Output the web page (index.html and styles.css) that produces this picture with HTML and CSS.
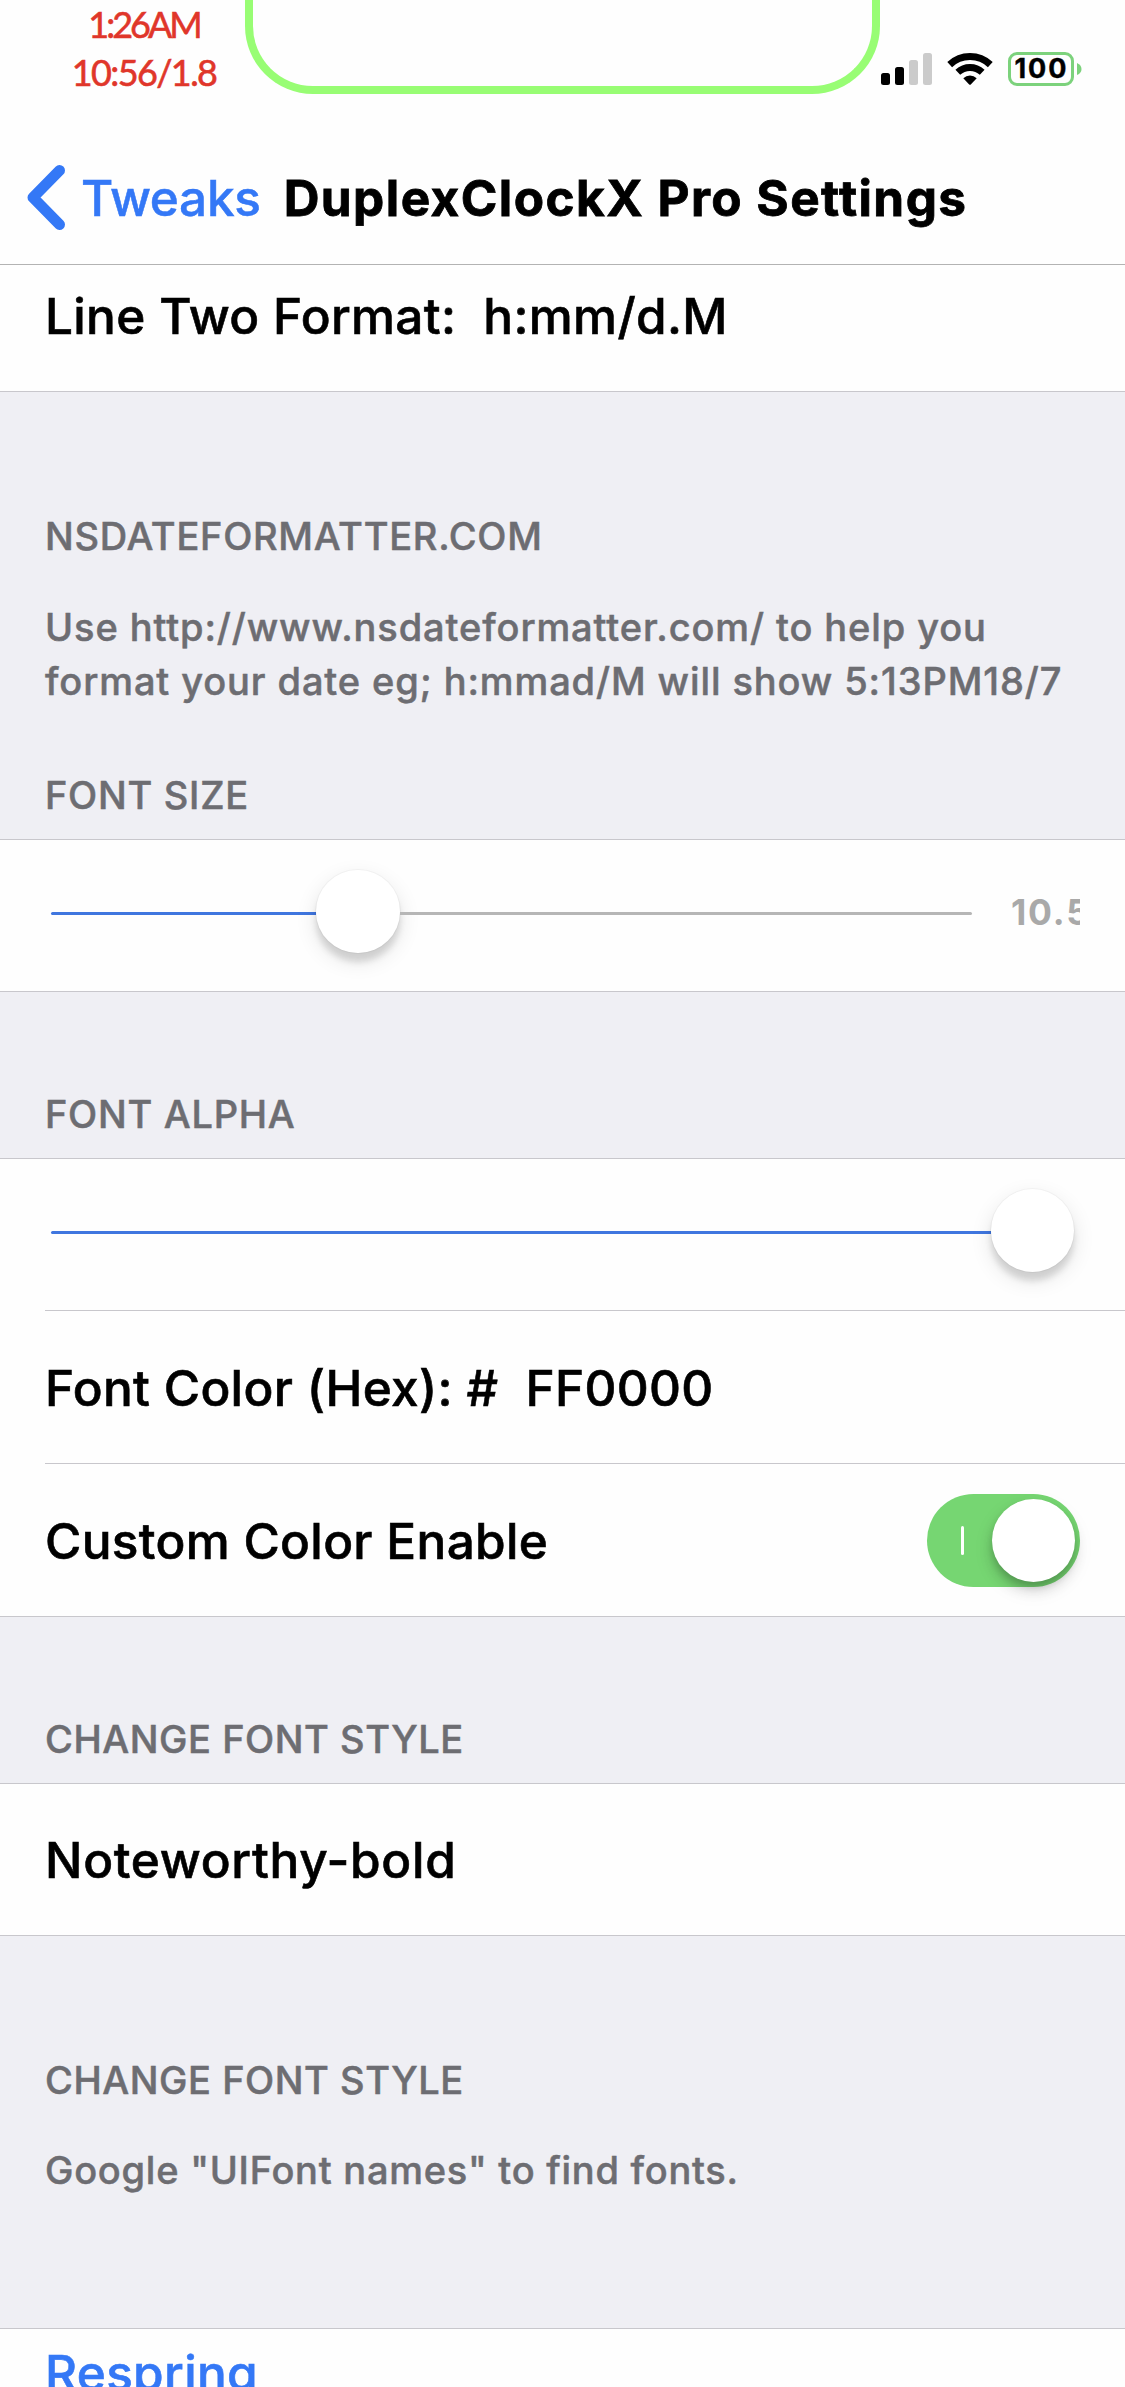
FILE: index.html
```html
<!DOCTYPE html>
<html lang="en">
<head>
<meta charset="utf-8">
<title>DuplexClockX Pro Settings</title>
<link rel="stylesheet" href="styles.css">
</head>
<body>
<header class="top">
  <div class="status">
    <div class="clock">
      <div class="clock-line clock-time">1:26AM</div>
      <div class="clock-line clock-date">10:56/1.8</div>
    </div>
    <div class="notch"></div>
    <div class="indicators">
      <svg class="signal" width="51" height="32" viewBox="0 0 51 32">
        <rect x="0" y="20" width="9" height="12" rx="2.5"/>
        <rect x="14" y="14" width="9" height="18" rx="2.5"/>
        <rect class="dim" x="28" y="7" width="9" height="25" rx="2.5"/>
        <rect class="dim" x="42" y="0" width="9" height="32" rx="2.5"/>
      </svg>
      <svg class="wifi" width="46" height="33" viewBox="0 0 46 33">
        <path class="arc" d="M2.7 12.6A29.5 29.5 0 0 1 43.3 12.6"/>
        <path class="arc" d="M10.8 20.3A18 18 0 0 1 35.2 20.3"/>
        <path d="M16.3 26.2A10 10 0 0 1 29.7 26.2L23.8 32.5Q23 33.2 22.2 32.5Z"/>
      </svg>
      <div class="battery"><span class="level">100</span></div>
      <svg class="nub" width="5" height="12" viewBox="0 0 5 12"><path d="M0 0Q4.500 2 4.500 6T0 12Z"/></svg>
    </div>
  </div>
  <nav class="nav">
    <svg class="chevron" width="40" height="66" viewBox="0 0 40 66"><path d="M33.500 5.500L7 32.500L33.500 59.500"/></svg>
    <a class="back">Tweaks</a>
    <h1 class="title">DuplexClockX Pro Settings</h1>
  </nav>
</header>
<main>
  <section class="group group-first">
    <div class="row row-cut"><span class="label">Line Two Format:&nbsp; h:mm/d.M</span></div>
  </section>
  <h2 class="head head-loose">NSDATEFORMATTER.COM</h2>
  <p class="note">Use http://www.nsdateformatter.com/ to help you<br>format your date eg; h:mmad/M will show 5:13PM18/7</p>
  <h2 class="head head-size">FONT SIZE</h2>
  <section class="group">
    <div class="row row-slider">
      <div class="slider slider-size"><div class="fill"></div><div class="knob"></div><div class="rest"></div></div>
      <div class="value">10.5</div>
    </div>
  </section>
  <h2 class="head head-section">FONT ALPHA</h2>
  <section class="group">
    <div class="row row-slider">
      <div class="slider slider-alpha"><div class="fill"></div><div class="knob"></div></div>
    </div>
    <div class="row row-split"><span class="label">Font Color (Hex): #&nbsp; FF0000</span></div>
    <div class="row row-split row-toggle"><span class="label">Custom Color Enable</span>
      <div class="toggle"><div class="toggle-mark"></div><div class="knob knob-toggle"></div></div>
    </div>
  </section>
  <h2 class="head head-section head-tight">CHANGE FONT STYLE</h2>
  <section class="group">
    <div class="row"><span class="label label-wide">Noteworthy-bold</span></div>
  </section>
  <h2 class="head head-loose head-tight">CHANGE FONT STYLE</h2>
  <p class="note note-last">Google "UIFont names" to find fonts.</p>
  <section class="group group-last">
    <div class="row row-respring"><a class="label link">Respring</a></div>
  </section>
</main>
</body>
</html>
```
FILE: styles.css
```css
* { box-sizing: border-box; }
html, body { margin: 0; }
body {
  width: 1125px;
  height: 2387px;
  overflow: hidden;
  background: #efeff4;
  color: #000;
  font-family: Inter, "Liberation Sans", sans-serif;
}
h1, h2, p { margin: 0; }
svg { display: block; flex: none; }

.top { height: 265px; background: #fefefe; border-bottom: 1px solid #b3b3b3; }
.status { display: flex; height: 132px; }
.clock {
  width: 245px;
  padding-left: 44px;
  color: #e0362a;
  font: 400 36px/48px Lato, sans-serif;
  -webkit-text-stroke: .6px #e0362a;
}
.clock-line { width: 200px; text-align: center; white-space: nowrap; }
.clock-time { letter-spacing: -3px; }
.clock-date { letter-spacing: -1.6px; }
.notch {
  width: 635px;
  height: 94px;
  border: 8px solid #98fd74;
  border-top: 0;
  border-radius: 0 0 68px 68px;
}
.indicators { display: flex; align-items: flex-start; padding: 52px 0 0 1px; }
.signal { margin-top: 1px; }
.signal .dim { fill: #cbcbcb; }
.wifi { margin-left: 15px; }
.arc { fill: none; stroke: #000; stroke-width: 7; }
.battery {
  display: flex;
  align-items: center;
  justify-content: center;
  width: 66px;
  height: 34px;
  margin-left: 15px;
  border: 3px solid #7cd27c;
  border-radius: 9px;
}
.level { padding-left: 1px; font-size: 27px; font-weight: 700; line-height: 28px; letter-spacing: 2px; -webkit-text-stroke: .4px #000; }
.nub { margin: 11px 0 0 3px; fill: #7cd27c; }

.nav { display: flex; align-items: center; height: 132px; padding-left: 26px; }
.chevron path { fill: none; stroke: #3478f6; stroke-width: 11; stroke-linecap: round; stroke-linejoin: round; }
.back, .title { font-size: 49.5px; line-height: 60px; white-space: nowrap; -webkit-text-stroke: .5px currentColor; }
.back { margin-left: 15px; color: #3478f6; font-weight: 500; letter-spacing: -.3px; }
.title { margin-left: 23px; font-weight: 700; letter-spacing: 1.45px; -webkit-text-stroke-width: .8px; }

.group { background: #fefefe; border-top: 1px solid #c8c7cc; border-bottom: 1px solid #c8c7cc; }
.group-first { border-top: 0; }
.row { display: flex; align-items: center; height: 151px; padding-left: 45px; }
.row-cut { height: 126px; padding-bottom: 24px; }
.row-split { position: relative; height: 153px; padding-top: 2px; }
.row-split::before {
  position: absolute;
  top: 0;
  left: 45px;
  right: 0;
  border-top: 1px solid #c8c7cc;
  content: "";
}
.row-toggle { justify-content: space-between; padding-right: 45px; }
.row-respring { height: 87px; }
.label { font-size: 49.5px; font-weight: 500; line-height: 60px; letter-spacing: .33px; white-space: nowrap; -webkit-text-stroke: .6px currentColor; }
.label-wide { letter-spacing: .7px; }
.link { color: #3478f6; }

.head, .note { padding-left: 45px; color: #6d6d72; font-size: 38px; font-weight: 500; line-height: 54px; white-space: nowrap; -webkit-text-stroke: .5px currentColor; }
.head { letter-spacing: .72px; }
.head-tight { letter-spacing: .55px; }
.head-loose { padding-top: 117px; }
.note { padding-top: 37px; letter-spacing: .9px; }
.note-last { padding-top: 36px; padding-bottom: 131px; letter-spacing: .75px; }
.head-size { padding-top: 60px; padding-bottom: 17px; }
.head-section { padding-top: 95px; padding-bottom: 17px; }

.row-slider { align-items: flex-start; padding-top: 30px; }
.slider { display: flex; align-items: center; height: 83px; padding-left: 6px; }
.slider-size { width: 927px; }
.slider-alpha { width: 1029px; }
.fill, .rest { height: 3px; margin-top: 4px; }
.fill { background: #3f76df; border-radius: 2px 0 0 2px; }
.rest { flex: 1; background: #b6b6b6; border-radius: 0 2px 2px 0; }
.slider-size .fill { width: 265px; }
.slider-alpha .fill { flex: 1; }
.knob {
  flex: none;
  width: 83.500px;
  height: 83.500px;
  border-radius: 50%;
  background: #fff;
  box-shadow: 0 0 0 1px rgba(0,0,0,.03), 0 9px 6px rgba(0,0,0,.12), 0 8px 22px rgba(0,0,0,.11);
}
.value {
  width: 69px;
  margin-left: 39px;
  overflow: hidden;
  color: #a9a9a9;
  font-size: 35.500px;
  font-weight: 700;
  line-height: 86px;
  letter-spacing: 1.8px;
}
.toggle {
  display: flex;
  align-items: center;
  justify-content: space-between;
  width: 153px;
  height: 93px;
  padding: 0 5px 0 34px;
  border-radius: 47px;
  background: #76d672;
}
.toggle-mark { width: 3px; height: 29px; border-radius: 2px; background: #fff; }
.knob-toggle { width: 83px; height: 83px; box-shadow: 0 8px 14px rgba(0,0,0,.16), 0 5px 6px rgba(0,0,0,.12), 0 8px 24px rgba(0,0,0,.06); }
```
